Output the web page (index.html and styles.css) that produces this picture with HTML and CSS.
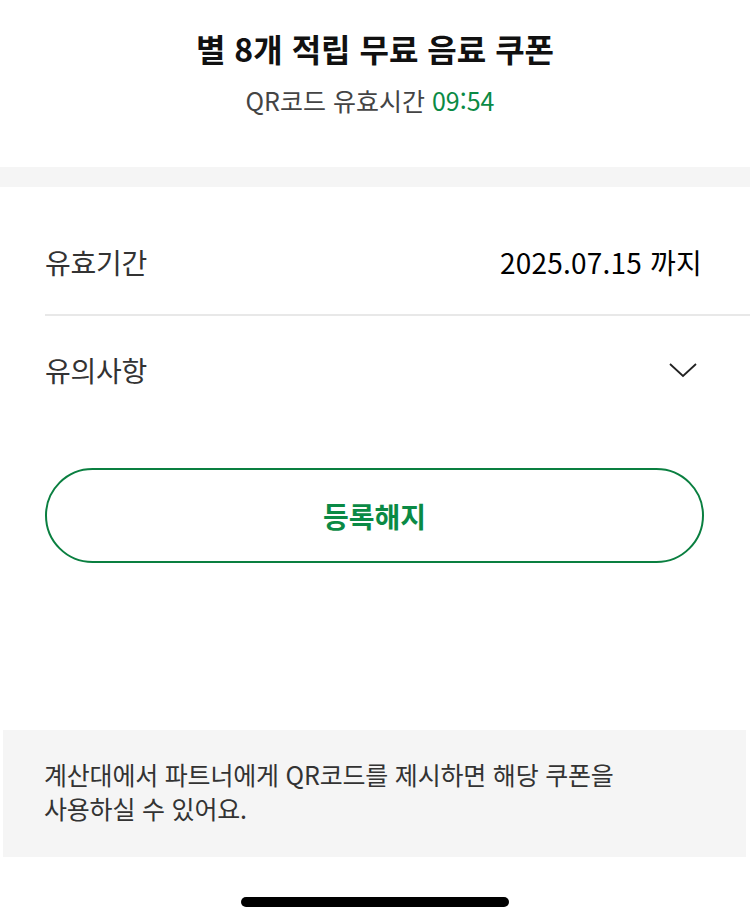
FILE: index.html
```html
<!DOCTYPE html>
<html lang="ko">
<head>
<meta charset="utf-8">
<link rel="stylesheet" href="styles.css">
</head>
<body>
<div class="page">
  <header class="header">
    <h1 class="title">별 8개 적립 무료 음료 쿠폰</h1>
    <p class="sub">QR코드 유효시간 <span class="green">09:54</span></p>
  </header>
  <div class="band"></div>
  <section class="info">
    <div class="row row-first">
      <span class="label">유효기간</span>
      <span class="value">2025.07.15 까지</span>
    </div>
    <div class="row row-second">
      <span class="label">유의사항</span>
      <svg class="chev" width="30" height="18" viewBox="0 0 30 18"><path d="M2 3 L15 15 L28 3" fill="none" stroke="#222" stroke-width="1.8"/></svg>
    </div>
    <div class="btn-wrap">
      <div class="btn">등록해지</div>
    </div>
  </section>
  <div class="notice">
    <p>계산대에서 파트너에게 QR코드를 제시하면 해당 쿠폰을<br>사용하실 수 있어요.</p>
  </div>
  <div class="home"><div class="bar"></div></div>
</div>
</body>
</html>
```
FILE: styles.css
```css
* { box-sizing: border-box; }
html, body { margin: 0; padding: 0; background: #fff; }
body {
  font-family: "Noto Sans CJK KR", "Noto Sans", sans-serif;
  color: #222;
  width: 750px;
}
.page { width: 750px; height: 924px; overflow: hidden; }
.header {
  height: 167px;
  display: flex;
  flex-direction: column;
  align-items: center;
  padding-top: 25px;
}
.title {
  margin: 0;
  font-size: 32px;
  font-weight: 700;
  line-height: 46px;
  color: #111;
}
.sub {
  margin: 11px 0 0;
  font-size: 25px;
  line-height: 36px;
  color: #444;
  padding-right: 10px;
}
.green { color: #0a8a45; font-weight: 400; }
.band { height: 20px; background: #f5f5f5; }
.info { padding-left: 45px; }
.row {
  display: flex;
  align-items: center;
  justify-content: space-between;
  padding-right: 48px;
}
.row-first {
  height: 129px;
  padding-top: 23px;
  border-bottom: 2px solid #e8e8e8;
}
.row-second { height: 107px; padding-right: 52px; }
.label { font-size: 28px; color: #333; letter-spacing: -0.3px; }
.value { font-size: 28px; color: #000; font-weight: 400; letter-spacing: 0.2px; }
.chev { display: block; }
.btn-wrap { padding: 45px 46px 0 0; }
.btn {
  height: 95px;
  border: 2px solid #0a7f40;
  border-radius: 48px;
  display: flex;
  align-items: center;
  justify-content: center;
  font-size: 28px;
  font-weight: 700;
  color: #0a8a45;
}
.notice {
  margin: 167px 4px 0 3px;
  height: 127px;
  background: #f5f5f5;
  padding: 27px 0 0 41px;
}
.notice p {
  margin: 0;
  font-size: 25px;
  line-height: 34px;
  color: #333;
  letter-spacing: -0.2px;
}
.home { display: flex; justify-content: center; padding-top: 40px; }
.bar { width: 268px; height: 10px; border-radius: 5px; background: #000; }
```
